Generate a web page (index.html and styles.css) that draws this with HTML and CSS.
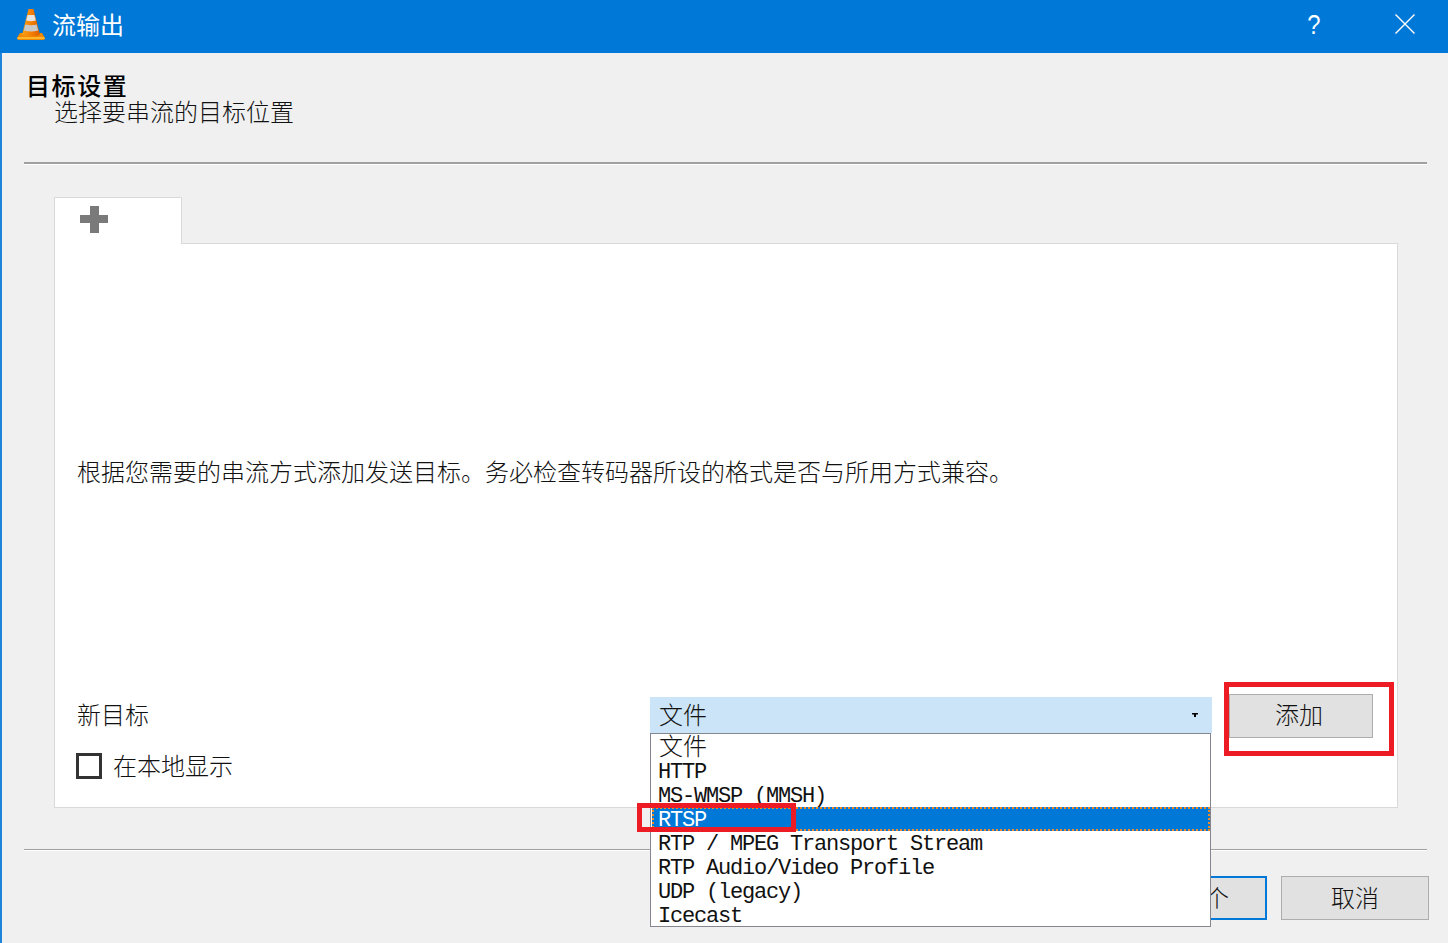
FILE: index.html
```html
<!DOCTYPE html>
<html lang="zh-CN">
<head>
<meta charset="utf-8">
<title>流输出</title>
<link rel="stylesheet" href="styles.css">
</head>
<body>
<div class="window">
  <header class="titlebar">
    <svg class="cone" width="30" height="32" viewBox="0 0 30 32">
      <defs>
        <linearGradient id="og" x1="0" x2="1" y1="0" y2="0">
          <stop offset="0" stop-color="#f7a21b"/><stop offset="0.55" stop-color="#f57c00"/><stop offset="1" stop-color="#d95f00"/>
        </linearGradient>
      </defs>
      <path d="M4 24 H26 L29 29 Q29 31 27 31 H3 Q1 31 1 29 Z" fill="#f08a00"/>
      <path d="M2 28 H28 L29 30 H1 Z" fill="#ffb52e"/>
      <path d="M12.5 0 H17.5 L24 26 Q15 29 6 26 Z" fill="url(#og)"/>
      <path d="M11.6 6 H18.4 L19.8 11.5 Q15 13 10.2 11.5 Z" fill="#e4e4e4"/>
      <path d="M9.4 15.5 Q15 17 20.6 15.5 L22.2 21.5 Q15 23.5 7.8 21.5 Z" fill="#c9c9c9"/>
    </svg>
    <span class="title-text">流输出</span>
    <span class="help">?</span>
    <svg class="close" width="20" height="20" viewBox="0 0 20 20"><path d="M0.5 0.5 L19.5 19.5 M19.5 0.5 L0.5 19.5" stroke="#fff" stroke-width="1.4" fill="none"/></svg>
  </header>
  <main class="content">
    <section class="wizard-head">
      <h1 class="head-title">目标设置</h1>
      <p class="head-sub">选择要串流的目标位置</p>
    </section>
    <hr class="sep sep-top">
    <div class="tabs">
      <div class="tab">
        <svg class="plus" width="28" height="27" viewBox="0 0 28 27"><path d="M10 0 H19 V9 H28 V17 H19 V27 H10 V17 H0 V9 H10 Z" fill="#7a7a7a"/></svg>
      </div>
    </div>
    <section class="panel">
      <p class="desc">根据您需要的串流方式添加发送目标。务必检查转码器所设的格式是否与所用方式兼容。</p>
      <div class="form-row">
        <span class="label label-target">新目标</span>
        <div class="combo">
          <span class="combo-value">文件</span>
          <svg class="arrow" width="6" height="4" viewBox="0 0 6 4"><path d="M0 0 H6 V1.5 H4 V4 H2 V1.5 H0 Z" fill="#000"/></svg>
          <ul class="popup">
            <li class="opt opt-cjk">文件</li>
            <li class="opt">HTTP</li>
            <li class="opt">MS-WMSP (MMSH)</li>
            <li class="opt opt-selected">RTSP<span class="mark mark-rtsp"></span></li>
            <li class="opt">RTP / MPEG Transport Stream</li>
            <li class="opt">RTP Audio/Video Profile</li>
            <li class="opt">UDP (legacy)</li>
            <li class="opt">Icecast</li>
          </ul>
        </div>
        <button class="btn btn-add">添加<span class="mark mark-add"></span></button>
      </div>
      <label class="check-row">
        <span class="checkbox"></span>
        <span class="label">在本地显示</span>
      </label>
    </section>
    <hr class="sep sep-bottom">
    <footer class="actions">
      <button class="btn btn-next">下一个</button>
      <button class="btn">取消</button>
    </footer>
  </main>
</div>
</body>
</html>
```
FILE: styles.css
```css
* { box-sizing: border-box; }
html, body { margin: 0; padding: 0; }
body {
  width: 1448px;
  height: 943px;
  overflow: hidden;
  background: #f0f0f0;
  color: #111;
  font-family: "Noto Sans CJK SC", "Liberation Sans", sans-serif;
  font-size: 24px;
  font-weight: 300;
}
.window {
  display: flex;
  flex-direction: column;
  height: 943px;
  border-left: 2px solid #1f84dc;
}
.titlebar {
  display: flex;
  align-items: center;
  flex: 0 0 53px;
  margin-left: -2px;
  padding-left: 16px;
  background: #0078d7;
  color: #fff;
}
.cone { flex: none; margin-top: -4px; }
.title-text { margin-left: 6px; padding-bottom: 6px; line-height: 24px; font-weight: 400; }
.help {
  margin-left: auto;
  padding-bottom: 4px;
  font-family: "Liberation Sans", sans-serif;
  font-size: 28px;
  font-weight: 400;
  line-height: 24px;
  transform: scaleX(0.85);
}
.close { margin: 0 33px 6px 73px; flex: none; }
.content {
  flex: 1;
  padding: 19px 19px 0 22px;
}
.wizard-head { height: 90px; padding-left: 2px; }
.head-title {
  margin: 0;
  font-size: 24px;
  font-weight: 500;
  line-height: 26px;
  letter-spacing: 1.6px;
  color: #000;
}
.head-sub { margin: 0 0 0 28px; line-height: 26px; }
.sep {
  margin: 0;
  border: 0;
  width: 1403px;
  background: #a0a0a0;
}
.sep-top { height: 2px; box-shadow: 0 1px 0 #fff; }
.sep-bottom { height: 1px; margin-top: 41px; box-shadow: 0 1px 0 #fff; }
.tabs { margin: 33px 0 0 30px; height: 47px; display: flex; position: relative; z-index: 1; }
.tab {
  width: 128px;
  height: 47px;
  padding: 8px 0 0 25px;
  background: #fff;
  border: 1px solid #d9d9d9;
  border-bottom: 0;
}
.plus { display: block; }
.panel {
  margin: -1px 0 0 30px;
  width: 1344px;
  height: 565px;
  padding: 215px 24px 0 22px;
  background: #fff;
  border: 1px solid #d9d9d9;
}
.desc { margin: 0; line-height: 24px; }
.form-row {
  display: grid;
  grid-template-columns: 573px 562px 161px;
  align-items: center;
  height: 44px;
  margin-top: 211px;
}
.label { line-height: 24px; padding-bottom: 2px; }
.label-target { padding-bottom: 4px; }
.combo {
  position: relative;
  display: flex;
  align-items: center;
  justify-content: space-between;
  align-self: start;
  height: 36px;
  margin-top: 3px;
  padding: 0 16px 0 9px;
  background: #cce4f7;
  z-index: 3;
}
.combo-value { line-height: 24px; padding-bottom: 2px; }
.arrow { display: block; margin-right: -2px; }
.popup {
  position: absolute;
  top: 36px;
  left: 0;
  width: 561px;
  height: 194px;
  margin: 0;
  padding: 1px 0 0;
  list-style: none;
  background: #fff;
  border: 1px solid #85858f;
}
.opt {
  position: relative;
  height: 24px;
  padding-left: 7px;
  font-family: "Liberation Mono", "Noto Sans CJK SC", monospace;
  font-size: 22px;
  font-weight: 400;
  letter-spacing: -1.2px;
  line-height: 28px;
  white-space: pre;
  color: #111;
}
.opt-cjk {
  padding-left: 8px;
  font-family: "Noto Sans CJK SC", sans-serif;
  font-size: 24px;
  font-weight: 300;
  letter-spacing: 0;
  line-height: 20px;
}
.opt-selected {
  margin-left: 1px;
  padding-left: 6px;
  background: #0078d7;
  color: #fff;
  outline: 2px dotted #f08a24;
  outline-offset: -2px;
}
.mark {
  position: absolute;
  border-style: solid;
  border-color: #ed1c24;
  pointer-events: none;
}
.mark-rtsp {
  left: -15px;
  top: -4px;
  width: 159px;
  height: 29px;
  border-width: 5px;
}
.btn {
  position: relative;
  width: 148px;
  height: 44px;
  padding: 0 0 2px;
  background: #e1e1e1;
  border: 1px solid #adadad;
  color: #111;
  font: inherit;
  line-height: 24px;
}
.btn-add {
  width: 144px;
  justify-self: end;
  padding: 0 4px 4px 0;
}
.mark-add {
  left: -6px;
  top: -13px;
  width: 170px;
  height: 74px;
  border-width: 5px;
}
.check-row {
  display: flex;
  align-items: center;
  gap: 11px;
  margin: 15px 0 0 -1px;
  height: 26px;
}
.checkbox {
  flex: none;
  width: 26px;
  height: 26px;
  padding: 0;
  border: 3px solid #333;
  background: #fff;
}
.actions {
  display: flex;
  justify-content: flex-end;
  gap: 14px;
  width: 1405px;
  margin-top: 26px;
}
.btn-next { border: 2px solid #0078d7; }
```
